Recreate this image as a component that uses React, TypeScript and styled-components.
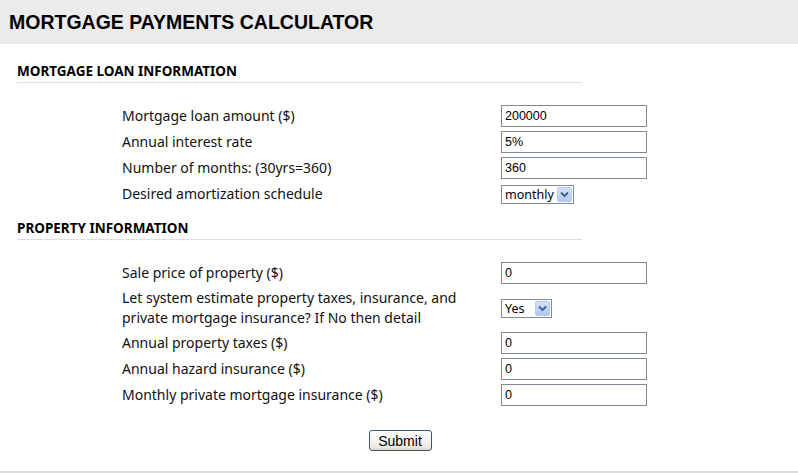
import React from "react";
import styled, { createGlobalStyle } from "styled-components";

const Global = createGlobalStyle`
  html, body { margin: 0; padding: 0; background: #ffffff; }
  body { font-family: "Noto Sans", "Open Sans", sans-serif; color: #000; }
  * { box-sizing: border-box; }
`;

const Page = styled.div`
  width: 798px;
  height: 473px;
  display: flex;
  flex-direction: column;
  border-bottom: 2px solid #dcdcdc;
`;

const TitleBar = styled.header`
  height: 44px;
  background: #ebebeb;
  display: flex;
  align-items: center;
  padding-left: 9px;
`;

const Title = styled.h1`
  margin: 0;
  font-family: "Liberation Sans", Arial, sans-serif;
  font-weight: bold;
  font-size: 19.5px;
  color: #000;
`;

const Form = styled.form`
  display: flex;
  flex-direction: column;
  padding-left: 17px;
`;

const SectionTitle = styled.h2<{ $top: number }>`
  margin: ${(p) => p.$top}px 0 0 0;
  width: 565px;
  font-family: "Noto Sans", "Open Sans", sans-serif;
  font-weight: bold;
  font-size: 13.5px;
  line-height: 16px;
  padding-bottom: 3px;
  border-bottom: 1px solid #dedede;
  color: #000;
`;

const Rows = styled.div`
  display: flex;
  flex-direction: column;
  padding-top: 20px;
`;

const Row = styled.div<{ $h?: number }>`
  display: grid;
  grid-template-columns: 379px auto;
  align-items: center;
  height: ${(p) => p.$h ?? 26}px;
  padding-left: 105px;
`;

const Label = styled.label`
  font-family: "Noto Sans", "Open Sans", sans-serif;
  font-size: 14px;
  line-height: 20px;
  color: #111;
`;

const TextInput = styled.input`
  width: 146px;
  height: 22px;
  border: 1px solid #7f8b96;
  background: #fff;
  padding: 0 3px;
  font-family: "Liberation Sans", Arial, sans-serif;
  font-size: 12.5px;
  color: #000;
  outline: none;
`;

const SelectBox = styled.div<{ $w: number }>`
  width: ${(p) => p.$w}px;
  height: 19px;
  border: 1px solid #7f8b96;
  background: #fff;
  display: flex;
  align-items: center;
  justify-content: space-between;
  padding: 0 1px 0 3px;
  font-family: "Noto Sans", "Open Sans", sans-serif;
  font-size: 12.5px;
  color: #000;
`;

const SelectText = styled.span`
  line-height: 17px;
`;

const ArrowBtn = styled.span`
  width: 15px;
  height: 15px;
  background: linear-gradient(#d3e0fb, #b3c8f5);
  border: 1px solid #b8cbf1;
  border-radius: 2px;
  display: flex;
  align-items: center;
  justify-content: center;
`;

const Footer = styled.div`
  display: flex;
  justify-content: center;
  padding-top: 22px;
  padding-right: 15px;
`;

const SubmitButton = styled.button`
  width: 63px;
  height: 21px;
  border: 1px solid #3e5670;
  border-radius: 3px;
  background: linear-gradient(#ffffff, #ecebe6 85%, #d6d0c5);
  font-family: "Liberation Sans", Arial, sans-serif;
  font-size: 14px;
  padding: 0;
  color: #000;
`;

const Chevron = () => (
  <svg width="9" height="7" viewBox="0 0 9 7">
    <path d="M1 1.5 L4.5 5 L8 1.5" fill="none" stroke="#4d6185" strokeWidth="2" />
  </svg>
);

const Select = ({ value, width }: { value: string; width: number }) => (
  <SelectBox $w={width}>
    <SelectText>{value}</SelectText>
    <ArrowBtn>
      <Chevron />
    </ArrowBtn>
  </SelectBox>
);

export default function App() {
  return (
    <>
      <Global />
      <Page>
        <TitleBar>
          <Title>MORTGAGE PAYMENTS CALCULATOR</Title>
        </TitleBar>
        <Form onSubmit={(e) => e.preventDefault()}>
          <SectionTitle $top={19}>MORTGAGE LOAN INFORMATION</SectionTitle>
          <Rows>
            <Row>
              <Label>Mortgage loan amount ($)</Label>
              <TextInput defaultValue="200000" />
            </Row>
            <Row>
              <Label>Annual interest rate</Label>
              <TextInput defaultValue="5%" />
            </Row>
            <Row>
              <Label>Number of months: (30yrs=360)</Label>
              <TextInput defaultValue="360" />
            </Row>
            <Row>
              <Label>Desired amortization schedule</Label>
              <Select value="monthly" width={73} />
            </Row>
          </Rows>
          <SectionTitle $top={13}>PROPERTY INFORMATION</SectionTitle>
          <Rows>
            <Row>
              <Label>Sale price of property ($)</Label>
              <TextInput defaultValue="0" />
            </Row>
            <Row $h={44}>
              <Label>
                Let system estimate property taxes, insurance, and
                <br />
                private mortgage insurance? If No then detail
              </Label>
              <Select value="Yes" width={51} />
            </Row>
            <Row>
              <Label>Annual property taxes ($)</Label>
              <TextInput defaultValue="0" />
            </Row>
            <Row>
              <Label>Annual hazard insurance ($)</Label>
              <TextInput defaultValue="0" />
            </Row>
            <Row>
              <Label>Monthly private mortgage insurance ($)</Label>
              <TextInput defaultValue="0" />
            </Row>
          </Rows>
          <Footer>
            <SubmitButton type="submit">Submit</SubmitButton>
          </Footer>
        </Form>
      </Page>
    </>
  );
}
